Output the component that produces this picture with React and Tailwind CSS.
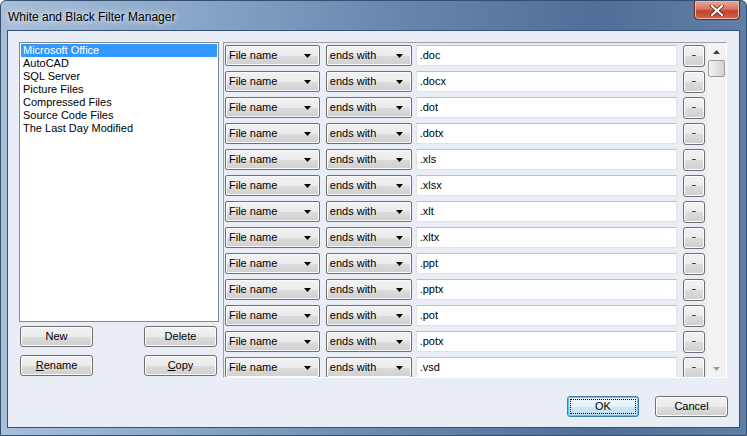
import React from 'react';

const exts = ['.doc', '.docx', '.dot', '.dotx', '.xls', '.xlsx', '.xlt', '.xltx', '.ppt', '.pptx', '.pot', '.potx', '.vsd'];
const groups = ['Microsoft Office', 'AutoCAD', 'SQL Server', 'Picture Files', 'Compressed Files', 'Source Code Files', 'The Last Day Modified'];

const btn = 'flex items-center justify-center h-[21px] rounded-[3px] border border-[#707070] bg-[linear-gradient(#f2f2f2_0%,#ebebeb_50%,#dddddd_51%,#cfcfcf_100%)] shadow-[inset_0_0_0_1px_#fcfcfc] text-black';

const Combo = ({ label, width }) => (
  <div className={`${width} h-[21px] flex items-center justify-between pl-[3px] pr-[8px] rounded-[2px] border border-[#707070] bg-[linear-gradient(#f2f2f2_0%,#ebebeb_50%,#dddddd_51%,#cfcfcf_100%)] shadow-[inset_0_0_0_1px_#fafafa]`}>
    <span>{label}</span>
    <svg width="7" height="4" viewBox="0 0 7 4"><path d="M0 0h7L3.5 4z" fill="#000" /></svg>
  </div>
);

const App = () => {
  return (
    <div
      className="w-[747px] h-[436px] flex flex-col overflow-hidden rounded-t-[6px] border border-[#34506f] bg-[linear-gradient(90deg,#a9bfd8_0%,#8aa6c8_25%,#6585ad_55%,#4f6f98_80%,#5f7fa6_100%)] text-[11px] text-black"
      style={{ fontFamily: '"Liberation Sans", Arial, sans-serif' }}
    >
      {/* Title bar */}
      <div className="h-[29px] flex items-start shrink-0">
        <div className="pl-[7px] pt-[7px] text-[12px] text-black [text-shadow:0_0_8px_#e4ecf5,0_0_4px_#e4ecf5]">
          White and Black Filter Manager
        </div>
        <div className="ml-auto mr-[6px] w-[46px] h-[20px] -mt-px flex items-center justify-center rounded-b-[4px] border border-[#5b2d28] bg-[linear-gradient(#e9a796_0%,#d9755f_45%,#c3412b_55%,#d0664c_100%)] shadow-[inset_0_0_0_1px_#f0b8a8]">
          <svg width="14" height="11" viewBox="0 0 14 11">
            <path d="M2 1l10 9M12 1L2 10" stroke="#3d1b16" strokeWidth="3.6" strokeLinecap="square" />
            <path d="M2 1l10 9M12 1L2 10" stroke="#ffffff" strokeWidth="2.2" strokeLinecap="square" />
          </svg>
        </div>
      </div>

      {/* Client area */}
      <div className="mx-[6px] mb-[7px] flex-1 border border-[#33507a] bg-[#e9eef6] flex flex-col pt-[11px] pl-[11px] pr-[10px]">
        <div className="flex gap-[4px]">
          {/* Left column */}
          <div className="w-[200px] flex flex-col">
            <div className="h-[280px] border border-[#828790] bg-white p-px">
              {groups.map((g, i) => (
                <div
                  key={g}
                  className={`h-[13px] leading-[13px] pl-[2px] ${i === 0 ? 'bg-[#3399ff] text-white' : ''}`}
                >
                  {g}
                </div>
              ))}
            </div>
            <div className="mt-[4px] flex justify-between pl-px pr-[2px]">
              <div className={`${btn} w-[73px]`}>New</div>
              <div className={`${btn} w-[73px]`}>Delete</div>
            </div>
            <div className="mt-[8px] flex justify-between pl-px pr-[2px]">
              <div className={`${btn} w-[73px]`}><span><span className="underline">R</span>ename</span></div>
              <div className={`${btn} w-[73px]`}><span><span className="underline">C</span>opy</span></div>
            </div>
          </div>

          {/* Filter rules panel */}
          <div className="w-[504px] h-[336px] flex border-t border-l border-[#a0a0a0] border-b border-r border-b-white border-r-white">
            <div className="flex-1 overflow-hidden flex flex-col gap-[5px] pt-[2px] pl-px">
              {exts.map((e) => (
                <div key={e} className="flex items-center h-[21px] shrink-0">
                  <Combo label="File name" width="w-[95px]" />
                  <div className="w-[6px]" />
                  <Combo label="ends with" width="w-[86px]" />
                  <div className="w-[4px]" />
                  <div className="w-[262px] h-[21px] flex items-center pl-[3px] bg-white border border-[#dfe3e8] border-t-[#b8c0c9]">
                    {e}
                  </div>
                  <div className="w-[6px]" />
                  <div className="w-[22px] h-[22px] flex items-center justify-center rounded-[3px] border border-[#707070] bg-[linear-gradient(#f2f2f2_0%,#ebebeb_50%,#dddddd_51%,#cfcfcf_100%)] shadow-[inset_0_0_0_1px_#fcfcfc]">
                    <div className="w-[4px] h-px bg-[linear-gradient(90deg,#2b6ad8,#202020,#d08030)]" />
                  </div>
                </div>
              ))}
            </div>
            {/* Scrollbar */}
            <div className="w-[19px] ml-[2px] bg-[#f3f3f3] flex flex-col items-center">
              <div className="h-[17px] w-full flex items-center justify-center">
                <svg width="7" height="4" viewBox="0 0 7 4"><path d="M3.5 0L7 4H0z" fill="#3c3c3c" /></svg>
              </div>
              <div className="w-[17px] h-[17px] rounded-[2px] border border-[#9c9c9c] bg-[linear-gradient(90deg,#f4f4f4,#e2e2e2_50%,#d2d2d2)]" />
              <div className="flex-1" />
              <div className="h-[17px] w-full flex items-center justify-center">
                <svg width="7" height="4" viewBox="0 0 7 4"><path d="M0 0h7L3.5 4z" fill="#9a9a9a" /></svg>
              </div>
            </div>
          </div>
        </div>

        {/* Dialog buttons */}
        <div className="mt-[18px] flex justify-end gap-[16px] pr-px">
          <div className="w-[72px] h-[21px] flex items-center justify-center rounded-[3px] border border-[#3c7fb1] bg-[linear-gradient(#f0f8fd_0%,#e4f2fb_50%,#cde8f8_51%,#bfe0f5_100%)] shadow-[inset_0_0_0_1px_#48d0f8]">
            <div className="w-[66px] h-[15px] flex items-center justify-center border border-dotted border-black">OK</div>
          </div>
          <div className={`${btn} w-[73px]`}>Cancel</div>
        </div>
      </div>
    </div>
  );
};

export default App;
